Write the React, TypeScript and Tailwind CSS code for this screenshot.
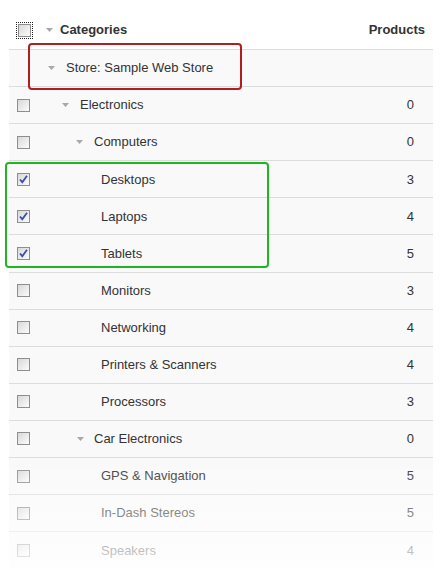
import React from "react";

type Row = {
  name: string;
  count?: string;
  checkbox: boolean;
  checked?: boolean;
  tri: boolean;
  triPad: string;
  textPad: string;
};

const rows: Row[] = [
  { name: "Store: Sample Web Store", checkbox: false, tri: true, triPad: "pl-[2px]", textPad: "ml-[11px]" },
  { name: "Electronics", count: "0", checkbox: true, tri: true, triPad: "pl-[16px]", textPad: "ml-[11px]" },
  { name: "Computers", count: "0", checkbox: true, tri: true, triPad: "pl-[30px]", textPad: "ml-[11px]" },
  { name: "Desktops", count: "3", checkbox: true, checked: true, tri: false, triPad: "pl-[55px]", textPad: "" },
  { name: "Laptops", count: "4", checkbox: true, checked: true, tri: false, triPad: "pl-[55px]", textPad: "" },
  { name: "Tablets", count: "5", checkbox: true, checked: true, tri: false, triPad: "pl-[55px]", textPad: "" },
  { name: "Monitors", count: "3", checkbox: true, tri: false, triPad: "pl-[55px]", textPad: "" },
  { name: "Networking", count: "4", checkbox: true, tri: false, triPad: "pl-[55px]", textPad: "" },
  { name: "Printers & Scanners", count: "4", checkbox: true, tri: false, triPad: "pl-[55px]", textPad: "" },
  { name: "Processors", count: "3", checkbox: true, tri: false, triPad: "pl-[55px]", textPad: "" },
  { name: "Car Electronics", count: "0", checkbox: true, tri: true, triPad: "pl-[31px]", textPad: "ml-[10px]" },
  { name: "GPS & Navigation", count: "5", checkbox: true, tri: false, triPad: "pl-[55px]", textPad: "" },
  { name: "In-Dash Stereos", count: "5", checkbox: true, tri: false, triPad: "pl-[55px]", textPad: "" },
  { name: "Speakers", count: "4", checkbox: true, tri: false, triPad: "pl-[55px]", textPad: "" },
];

function Tri() {
  return (
    <svg width="7" height="4" viewBox="0 0 7 4" className="shrink-0">
      <polygon points="0,0 7,0 3.5,4" fill="#a8a8a8" />
    </svg>
  );
}

function Check({ checked, focus }: { checked?: boolean; focus?: boolean }) {
  return (
    <div
      className={
        "relative w-[13px] h-[13px] border border-[#8e8e8e] bg-linear-to-br from-[#d8d8d8] to-[#fcfcfc] " +
        (focus ? "outline-1 outline-dotted outline-[#222] outline-offset-[1px]" : "")
      }
    >
      {checked && (
        <svg width="11" height="11" viewBox="0 0 11 11" className="absolute left-0 top-0">
          <path d="M2 5.5 L4.3 8.2 L9 1.8" stroke="#3b4fa6" strokeWidth="1.8" fill="none" />
        </svg>
      )}
    </div>
  );
}

export default function App() {
  return (
    <div
      className="relative w-[444px] h-[567px] overflow-hidden bg-white text-[13px] text-[#333]"
      style={{ fontFamily: '"Liberation Sans", Arial, sans-serif' }}
    >
      <div className="ml-[9px] w-[424px]">
        <div className="flex items-center h-[49px] pt-[11px]">
          <div className="w-[37px] pl-[9px] flex items-center">
            <Check focus />
          </div>
          <div className="flex items-center flex-1">
            <Tri />
            <span className="ml-[7px] font-bold">Categories</span>
          </div>
          <span className="pr-[8px] font-bold">Products</span>
        </div>
        {rows.map((r, i) => (
          <div
            key={i}
            className="flex items-center h-[37.1px] border-t border-[#dcdcdc] bg-[#f9f9f9]"
          >
            <div className="w-[37px] pl-[8px] flex items-center">
              {r.checkbox && <Check checked={r.checked} />}
            </div>
            <div className={"flex items-center flex-1 " + r.triPad}>
              {r.tri && <Tri />}
              <span className={r.textPad}>{r.name}</span>
            </div>
            {r.count && <span className="pr-[19px]">{r.count}</span>}
          </div>
        ))}
      </div>

      <div className="absolute left-[28px] top-[43px] w-[214px] h-[47px] border-2 border-[#b01e1e] rounded-[4px] pointer-events-none" />
      <div className="absolute left-[5px] top-[162px] w-[264px] h-[106px] border-2 border-[#22b522] rounded-[4px] pointer-events-none" />
      <div className="absolute left-0 right-0 top-[455px] bottom-0 bg-linear-to-b from-white/0 to-white/80 pointer-events-none" />
    </div>
  );
}
